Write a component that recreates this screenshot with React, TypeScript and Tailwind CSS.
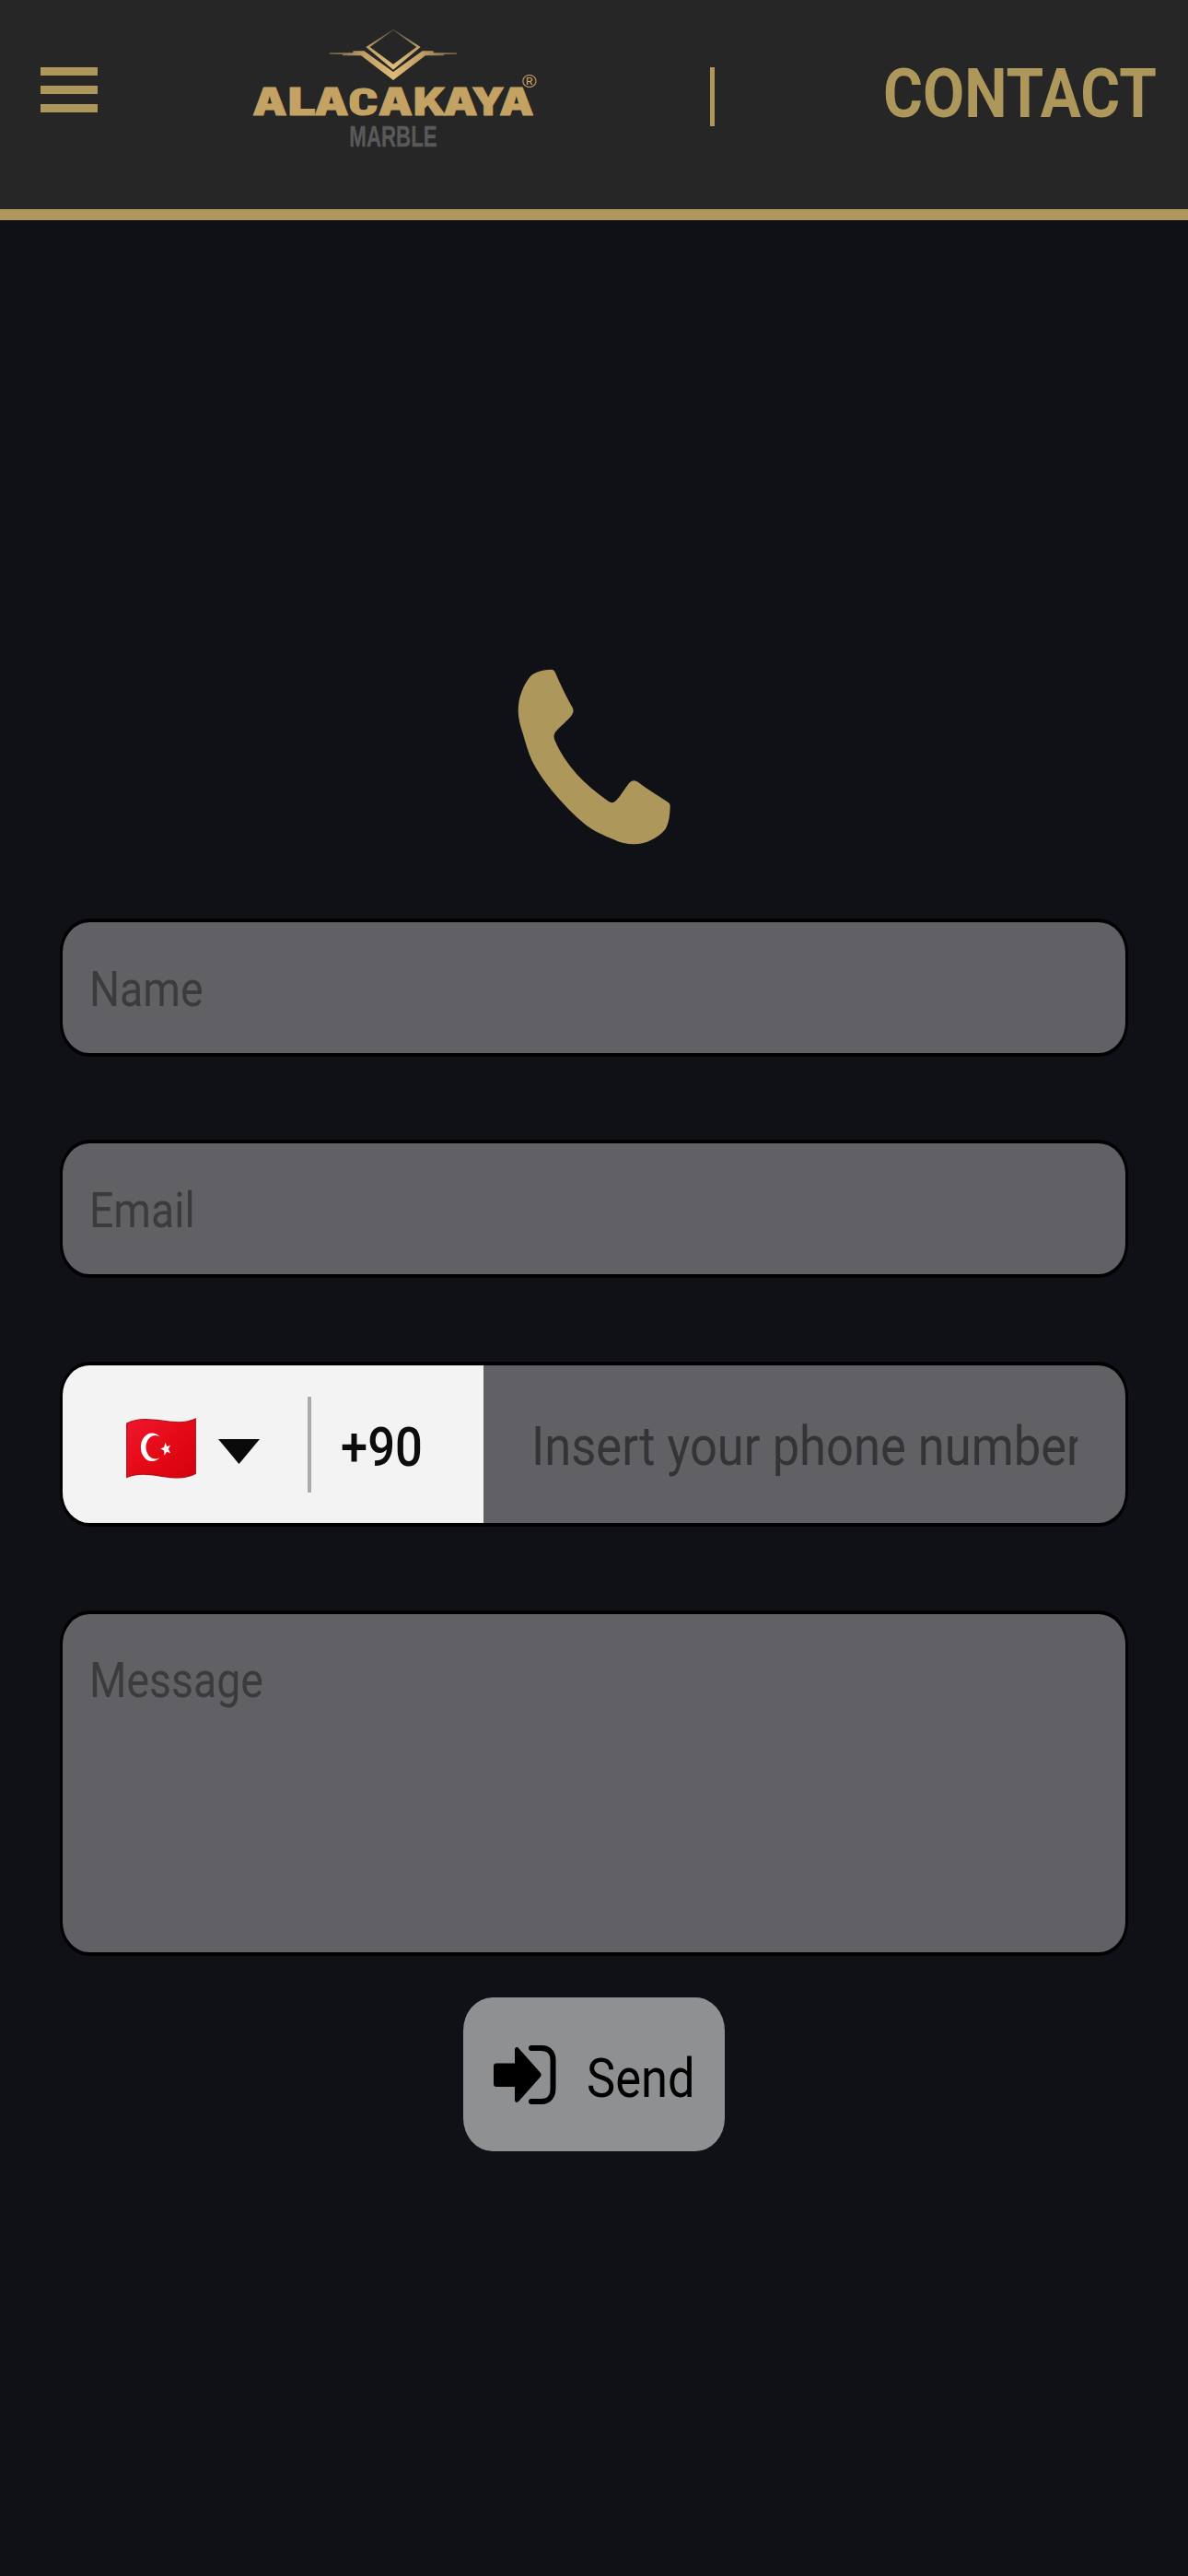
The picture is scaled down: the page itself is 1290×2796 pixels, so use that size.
const box =
  "overflow-hidden rounded-[32px/37px] border-x-[3px] border-y-[4px] border-black bg-[#606065]";
const control =
  "block origin-left scale-x-[0.875] bg-transparent outline-none resize-none placeholder:opacity-100";

function MenuIcon() {
  return (
    <button aria-label="Menu" className="mt-[73px] ml-11 flex h-[49px] w-[62px] shrink-0 flex-col justify-between">
      <span className="h-[9px] w-full bg-[#ad975a]" />
      <span className="h-[9px] w-full bg-[#ad975a]" />
      <span className="h-[9px] w-full bg-[#ad975a]" />
    </button>
  );
}

function Logo() {
  return (
    <svg className="mt-5 ml-[154px] h-[150px] w-[340px] shrink-0" viewBox="0 0 1020 450" role="img" aria-label="Alacakaya Marble">
      <defs>
        <linearGradient id="wing" x1="0" x2="1" y1="0" y2="0">
          <stop offset="0" stopColor="#6b5a45" />
          <stop offset="0.28" stopColor="#c2a066" />
          <stop offset="0.5" stopColor="#dcba79" />
          <stop offset="0.72" stopColor="#c2a066" />
          <stop offset="1" stopColor="#6b5a45" />
        </linearGradient>
        <linearGradient id="gem" x1="0" x2="0" y1="0" y2="1">
          <stop offset="0" stopColor="#4a443a" />
          <stop offset="0.45" stopColor="#c2a066" />
          <stop offset="1" stopColor="#e2c17f" />
        </linearGradient>
      </defs>
      <path fill="url(#gem)" fillRule="evenodd" d="M501 35 590 93 501 167 412 93Z M501 39 425 93 501 149 577 93Z" />
      <path fill="url(#wing)" d="M293 112H370V106H406L501 174 596 106H632V112H708V117H666V121H606L501 201 396 121H336V117H293Z" />
      <g fill="#c4a264" stroke="#c4a264" strokeWidth="3" fontFamily="Inter, sans-serif" fontWeight="900" fontSize="122">
        <text y="316" x="43" textLength="112" lengthAdjust="spacingAndGlyphs">A</text>
        <text y="316" x="158" textLength="90" lengthAdjust="spacingAndGlyphs">L</text>
        <text y="316" x="244" textLength="112" lengthAdjust="spacingAndGlyphs">A</text>
        <text y="315" x="354" textLength="97" lengthAdjust="spacingAndGlyphs" fontFamily="'Roboto Condensed', Roboto, sans-serif" fontWeight="800" style={{ fontStretch: "75%" }}>C</text>
        <text y="316" x="452" textLength="112" lengthAdjust="spacingAndGlyphs">A</text>
        <text y="316" x="567" textLength="106" lengthAdjust="spacingAndGlyphs">K</text>
        <text y="316" x="664" textLength="112" lengthAdjust="spacingAndGlyphs">A</text>
        <text y="316" x="757" textLength="106" lengthAdjust="spacingAndGlyphs">Y</text>
        <text y="316" x="847" textLength="112" lengthAdjust="spacingAndGlyphs">A</text>
      </g>
      <text x="921" y="226" fontFamily="Liberation Sans, sans-serif" fontSize="62" fill="#c4a264" textLength="47" lengthAdjust="spacingAndGlyphs">®</text>
      <text x="358" y="418" fontFamily="Liberation Sans, sans-serif" fontWeight="700" fontSize="96" fill="#59595b" stroke="#59595b" strokeWidth="1" textLength="286" lengthAdjust="spacingAndGlyphs">MARBLE</text>
    </svg>
  );
}

function PhoneIcon() {
  return (
    <svg className="mt-[487px] ml-[497px] h-[192px] w-[168px]" viewBox="126 79 504 576" fill="#ad975a" aria-hidden="true">
      <path d="M236 81C243 81 246 85 249 92C266 131 284 169 304 203C309 212 309 221 303 229C291 247 264 266 250 284C244 292 243 300 247 311C265 353 290 389 320 423C350 456 383 481 419 508C430 516 436 517 446 509C463 491 474 470 490 450C498 441 508 440 518 447C550 472 585 491 616 513C622 517 623 520 623 527C622 557 619 583 607 602C581 633 542 650 505 650C482 650 460 645 438 634C403 619 372 606 346 585C308 555 274 518 243 482C218 450 191 415 173 378C161 351 152 320 144 292C134 263 128 239 128 215C128 177 141 141 161 112C169 101 176 95 187 91C203 84 220 81 236 81Z" />
    </svg>
  );
}

function TurkishFlag() {
  return (
    <svg className="mt-[9px] h-[66px] w-[76px]" viewBox="0 0 76 66" aria-label="Turkey">
      <defs>
        <linearGradient id="flag" x1="0" y1="0" x2="1" y2="1">
          <stop offset="0" stopColor="#ef1730" />
          <stop offset="0.5" stopColor="#e50a17" />
          <stop offset="1" stopColor="#d5000c" />
        </linearGradient>
      </defs>
      <path d="M.7 6C26-6 51 12 75.3 1V60.500C51 73 26 54 .7 64.500Z" fill="url(#flag)" stroke="#b80f1b" strokeWidth="1.200" />
      <path d="M36.500 20.500A12.300 15.300 0 1 0 36.500 43A10.200 12.800 0 1 1 36.500 20.500Z" fill="#fff" />
      <path d="M42.500 26.500 44.200 31 48.100 29.700 45.800 33.700 48 38.300 44.200 36.700 41.500 40.700 41.200 35.500 37.300 33.500 41.200 31.800Z" fill="#fff" />
    </svg>
  );
}

function SendIcon() {
  return (
    <svg className="h-[66px] w-[69px]" viewBox="0 0 69 66" aria-hidden="true">
      <path d="M4 20.500H24V5Q25.500 1.500 28.500 4.500L52 31Q53.500 33 52 35L28.500 61.500Q25.500 64.500 24 61V46H4Q1 46 1 43V23.500Q1 20.500 4 20.500Z" />
      <path d="M42 4H53C61 4 65.500 9 65.500 17V48C65.500 56 61 62 53 62H42" fill="none" stroke="#000" strokeWidth="6" strokeLinecap="round" />
    </svg>
  );
}

export default function App() {
  return (
    <div className="min-h-[2796px] w-[1290px] overflow-hidden bg-[#0f1116] font-[Roboto,sans-serif]">
      <header className="flex h-[239px] items-start border-b-[12px] border-[#ad975a] bg-[#262626]">
        <MenuIcon />
        <Logo />
        <span className="mt-[73px] ml-[171px] h-16 w-[5px] shrink-0 bg-[#ad975a]" />
        <h1 className="mt-[57px] ml-[183px] shrink-0 origin-left scale-x-[0.875] text-[75px] leading-[88px] font-bold whitespace-nowrap text-[#ad975a]">
          CONTACT
        </h1>
      </header>

      <main className="px-[65px]">
        <PhoneIcon />
        <form className="mt-[79px] flex flex-col" onSubmit={(e) => e.preventDefault()}>
          <div className={`${box} h-[150px] pl-[29px]`}>
            <input aria-label="Name" placeholder="Name" className={`${control} h-full w-[1200px] pt-1 text-[53px] placeholder:text-[#3b3b3c]`} />
          </div>
          <div className={`${box} mt-[90px] h-[150px] pl-[29px]`}>
            <input aria-label="Email" placeholder="Email" className={`${control} h-full w-[1200px] pt-1 text-[53px] placeholder:text-[#3b3b3c]`} />
          </div>

          <div className={`${box} mt-[91px] flex h-[179px]`}>
            <div className="flex w-[457px] shrink-0 items-center bg-[#f3f3f3] pl-[69px]">
              <TurkishFlag />
              <svg className="mt-[15px] ml-6 h-[27px] w-[45px]" viewBox="0 0 45 27" fill="#0a0a0a" aria-hidden="true">
                <path d="M0 0H45L22.500 27Z" />
              </svg>
              <span className="ml-[52px] h-[104px] w-1 bg-[#ababab]" />
              <span className="ml-[32px] origin-left scale-x-[0.875] pt-[6px] text-[60px] font-medium text-[#0c0c0c]">+90</span>
            </div>
            <input
              type="tel"
              aria-label="Phone number"
              placeholder="Insert your phone number"
              className={`${control} ml-[52px] w-[678px] shrink-0 pt-[5px] text-[60px] placeholder:text-[#343436]`}
            />
          </div>

          <div className={`${box} mt-[91px] h-[375px] pl-[29px]`}>
            <textarea
              aria-label="Message"
              placeholder="Message"
              className={`${control} h-full w-[1200px] pt-[41px] text-[53px] leading-[62px] placeholder:text-[#3b3b3c]`}
            />
          </div>

          <button className="mt-[45px] ml-[438px] flex h-[167px] w-[284px] items-center rounded-[32px/36px] bg-[#8f9092] pl-8 text-[60px] text-black">
            <SendIcon />
            <span className="ml-[33px] origin-left scale-x-[0.875] pt-[8px]">Send</span>
          </button>
        </form>
      </main>
    </div>
  );
}
